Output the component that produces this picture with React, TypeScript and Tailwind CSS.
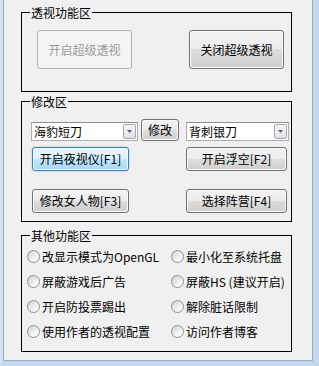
import React from 'react';

const font = "font-['Noto_Sans_CJK_SC','Noto_Sans',sans-serif]";

type Kind = 'normal' | 'blue' | 'disabled';

const buttonKinds: Record<Kind, string> = {
  normal:
    'border-[#707070] text-black bg-[linear-gradient(#f2f2f2_0%,#ebebeb_50%,#dddddd_50%,#cfcfcf_100%)] shadow-[inset_0_0_0_1px_#fbfbfb]',
  blue: 'border-[#3c7fb1] text-black bg-[linear-gradient(#eaf6fd_0%,#d9f0fc_50%,#bee6fd_50%,#a7d9f5_100%)] shadow-[inset_0_0_0_1px_#f4fbff,0_0_2px_#7ec4ef]',
  disabled: 'border-[#adb2b5] text-[#9a9a9a] bg-[#f4f4f4]',
};

const Button = ({
  kind = 'normal',
  className,
  children,
}: {
  kind?: Kind;
  className: string;
  children: React.ReactNode;
}) => (
  <div
    className={`flex items-center justify-center rounded-[3px] border text-[12px] leading-none ${buttonKinds[kind]} ${className}`}
  >
    {children}
  </div>
);

const Combo = ({ value, className }: { value: string; className: string }) => (
  <div
    className={`flex h-[19px] items-center justify-between border border-[#abadb3] border-t-[#8e8f8f] bg-white pl-[2px] pr-[1px] text-[12px] leading-none ${className}`}
  >
    <span>{value}</span>
    <span className="flex h-[15px] w-[13px] items-center justify-center rounded-[2px] border border-[#a7a7a7] bg-[linear-gradient(#f6f6f6,#e2e2e2)]">
      <svg width="5" height="3" viewBox="0 0 5 3">
        <path d="M0 0h5L2.5 3z" fill="#4d6185" />
      </svg>
    </span>
  </div>
);

const Radio = ({ label }: { label: string }) => (
  <div className="flex h-[25px] items-center gap-[2px] text-[12px]">
    <span className="h-[13px] w-[13px] shrink-0 rounded-full border border-[#8e8f8f] bg-[linear-gradient(135deg,#cfd1d3,#f7f7f7_70%)]" />
    <span className="whitespace-nowrap">{label}</span>
  </div>
);

const Group = ({
  title,
  className,
  children,
}: {
  title: string;
  className: string;
  children: React.ReactNode;
}) => (
  <fieldset className={`ml-[17px] w-[271px] border border-black ${className}`}>
    <legend className="ml-[8px] px-[1px] text-[12px] leading-[15px]">{title}</legend>
    {children}
  </fieldset>
);

export default function App() {
  return (
    <div
      className={`flex h-[366px] w-[319px] border-b-[5px] border-l-[3px] border-r-[6px] border-b-[#c3d8ee] border-l-[#d8e2ed] border-r-[#c3d8ee] ${font}`}
    >
      <div className="flex-1 border-b border-l border-r border-[#98abc2] bg-[#f0f0f0] text-black">
        <Group title="透视功能区" className="mt-[5px] pb-[22px]">
          <div className="flex gap-[57px] pl-[15px] pt-[10px]">
            <Button kind="disabled" className="h-[39px] w-[95px]">
              开启超级透视
            </Button>
            <Button className="h-[39px] w-[95px]">关闭超级透视</Button>
          </div>
        </Group>

        <Group title="修改区" className="mt-[2px] pb-[8px]">
          <div className="flex items-end pl-[9px] pt-[10px]">
            <Combo value="海豹短刀" className="w-[107px]" />
            <Button className="ml-[3px] h-[22px] w-[38px]">修改</Button>
            <Combo value="背刺银刀" className="ml-[7px] w-[103px]" />
          </div>
          <div className="mt-[6px] flex justify-between pl-[10px] pr-[4px]">
            <Button kind="blue" className="h-[24px] w-[97px]">
              开启夜视仪[F1]
            </Button>
            <Button className="h-[24px] w-[101px]">开启浮空[F2]</Button>
          </div>
          <div className="mt-[18px] flex justify-between pl-[10px] pr-[4px]">
            <Button className="h-[24px] w-[97px]">修改女人物[F3]</Button>
            <Button className="h-[24px] w-[101px]">选择阵营[F4]</Button>
          </div>
        </Group>

        <Group title="其他功能区" className="mt-[6px] pb-[7px]">
          <div className="grid grid-cols-[144px_1fr] pl-[5px] pt-[1px]">
            <Radio label="改显示模式为OpenGL" />
            <Radio label="最小化至系统托盘" />
            <Radio label="屏蔽游戏后广告" />
            <Radio label="屏蔽HS (建议开启)" />
            <Radio label="开启防投票踢出" />
            <Radio label="解除脏话限制" />
            <Radio label="使用作者的透视配置" />
            <Radio label="访问作者博客" />
          </div>
        </Group>
      </div>
    </div>
  );
}
